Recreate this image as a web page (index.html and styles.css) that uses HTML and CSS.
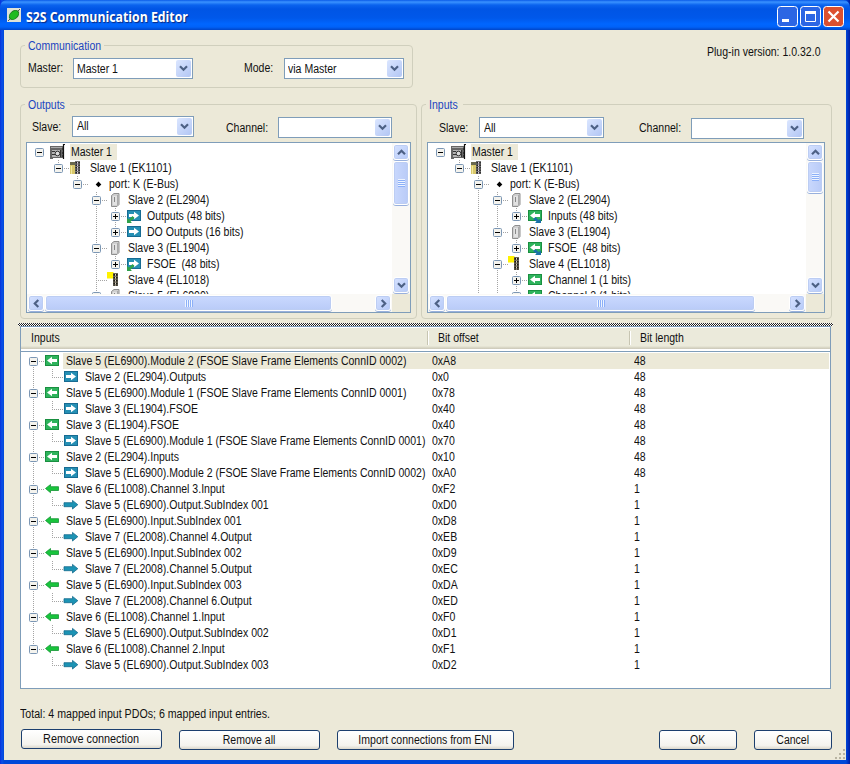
FILE: index.html
```html
<!DOCTYPE html>
<html lang="en">
<head>
<meta charset="utf-8">
<title>S2S Communication Editor</title>
<link rel="stylesheet" href="styles.css">
</head>
<body>
<svg class="defs" width="0" height="0" aria-hidden="true">
  <symbol id="down" viewBox="0 0 9 7"><path d="M1 1.2 4.5 4.7 8 1.2" fill="none" stroke="#4d6185" stroke-width="2.2"/></symbol>
  <symbol id="up" viewBox="0 0 9 7"><path d="M1 5.3 4.5 1.8 8 5.3" fill="none" stroke="#4d6185" stroke-width="2.2"/></symbol>
  <symbol id="left" viewBox="0 0 7 9"><path d="M5.3 1 1.8 4.5 5.3 8" fill="none" stroke="#4d6185" stroke-width="2.2"/></symbol>
  <symbol id="right" viewBox="0 0 7 9"><path d="M1.7 1 5.2 4.5 1.7 8" fill="none" stroke="#4d6185" stroke-width="2.2"/></symbol>
  <symbol id="minus" viewBox="0 0 9 9"><rect x=".5" y=".5" width="8" height="8" rx="1" fill="#f4f3ee" stroke="#7b96b4"/><path d="M2 4.5h5" stroke="#000"/></symbol>
  <symbol id="plus" viewBox="0 0 9 9"><rect x=".5" y=".5" width="8" height="8" rx="1" fill="#f4f3ee" stroke="#7b96b4"/><path d="M2 4.5h5M4.5 2v5" stroke="#000"/></symbol>
  <symbol id="master" viewBox="0 0 16 16"><path d="M0 2h13v12H3v1H0z" fill="#666"/><path d="M1 3.5h11" stroke="#aaa"/><path d="M2 6h9v7H2z" fill="#b4b4b4"/><circle cx="7.500" cy="9.500" r="2.300" fill="#ddd" stroke="#333"/><path d="M2 7.500h3M2 10.500h3M10.500 6v7" stroke="#333"/><path d="M15 .5h-1.500V15M12 5h2M12 9h2M12 12h2" fill="none" stroke="#111" stroke-width="1.200"/></symbol>
  <symbol id="coupler" viewBox="0 0 16 16"><path d="M1 2h5v12H1z" fill="#d8c76b"/><path d="M1 2h5v3H1z" fill="#6a684f"/><path d="M2.500 6v8" stroke="#f3e9a0"/><path d="M6 1h5v13H6z" fill="#777"/><path d="M7.200 2v12M10 2v12" stroke="#111" stroke-width="1.300" stroke-dasharray="1.5 1"/><path d="M8.600 2v12" stroke="#e8d6ef" stroke-dasharray="1.5 1"/></symbol>
  <symbol id="port" viewBox="0 0 16 16"><path d="M10.500 5.500 13.300 8.400 10.500 11.300 7.700 8.400z" fill="#000"/></symbol>
  <symbol id="module" viewBox="0 0 16 16"><path d="M4.500 3.500 7 1.500h5v11l-2 2H4.500z" fill="#cfcfcf" stroke="#8f8f8f"/><path d="M6 4h4v9H6z" fill="#e2e2e2"/><path d="M10.500 3v10" stroke="#aaa"/><path d="M7.500 5v5" stroke="#888"/></symbol>
  <symbol id="terminal" viewBox="0 0 16 16"><path d="M0 0h6.500v6.500H0z" fill="#fff200"/><path d="M6 1h5v13H6z" fill="#6d6757"/><path d="M7.200 2v12M9.800 2v12" stroke="#111" stroke-width="1.400" stroke-dasharray="1.7 1.2"/><path d="M8.500 2v12" stroke="#dcd6c4" stroke-dasharray="1.7 1.2"/></symbol>
  <symbol id="pdo-out" viewBox="0 0 16 16"><rect x="1.500" y="2.500" width="13" height="10" fill="#258fb4" stroke="#176b92"/><path d="M3 6h5V3.800L13 7.500 8 11.200V9H3z" fill="#fff"/></symbol>
  <symbol id="pdo-in" viewBox="0 0 16 16"><rect x="1.500" y="2.500" width="13" height="10" fill="#2eb35c" stroke="#198f40"/><path d="M13 6H8V3.800L3 7.500l5 3.700V9h5z" fill="#fff"/></symbol>
  <symbol id="safe-out" viewBox="0 0 16 16"><use href="#pdo-out"/><path d="M1 10v5h5l-1.500-1.500L8.500 10 6.500 8 3 11.500z" fill="#2fa14b"/></symbol>
  <symbol id="safe-in" viewBox="0 0 16 16"><use href="#pdo-in"/><path d="M6 11 8.500 9l3 3 2.500-1.500V15H8l1.500-1.500z" fill="#1b72a8"/></symbol>
  <symbol id="arrow-in" viewBox="0 0 16 16"><path d="M1.500 7.500 6.500 3.500v2.200h8v3.800h-8v2.200z" fill="#18c43c" stroke="#149434" stroke-width=".8"/></symbol>
  <symbol id="arrow-out" viewBox="0 0 16 16"><path d="M14.800 7.700 9.500 3.400v2.300H1v4h8.500V12z" fill="#1c93b4" stroke="#146b8e" stroke-width=".8"/></symbol>
</svg>

<header class="titlebar">
  <svg class="app" width="14" height="14" viewBox="0 0 14 14"><rect width="14" height="14" fill="#dfe2d6"/><path d="M1 13 13 1" stroke="#555"/><ellipse cx="7" cy="7" rx="5.300" ry="3.700" transform="rotate(-42 7 7)" fill="#1fbb20" stroke="#187c1c"/></svg>
  <h1>S2S Communication Editor</h1>
  <div class="winbtns">
    <svg width="21" height="21" viewBox="0 0 21 21"><rect class="wb" x=".5" y=".5" width="20" height="20" rx="3"/><path d="M5 14.500h7" stroke="#fff" stroke-width="3"/></svg>
    <svg width="21" height="21" viewBox="0 0 21 21"><rect class="wb" x=".5" y=".5" width="20" height="20" rx="3"/><path d="M5.500 6v9.500h10V6" fill="none" stroke="#fff"/><path d="M5 6.500h11" stroke="#fff" stroke-width="3"/></svg>
    <svg width="21" height="21" viewBox="0 0 21 21"><rect class="wb close" x=".5" y=".5" width="20" height="20" rx="3"/><path d="m5.500 5.500 10 10m0-10-10 10" stroke="#fff" stroke-width="2.200"/></svg>
  </div>
</header>

<main class="client">
  <div class="top">
    <section class="group comm">
      <div class="legend"><span class="t">Communication</span></div>
      <div class="fields">
        <label class="lb-master"><span class="t">Master:</span></label>
        <div class="combo w120"><span class="t">Master 1</span><b><svg width="9" height="7"><use href="#down"/></svg></b></div>
        <label class="lb-mode"><span class="t">Mode:</span></label>
        <div class="combo w120"><span class="t">via Master</span><b><svg width="9" height="7"><use href="#down"/></svg></b></div>
      </div>
    </section>
    <div class="version"><span class="t">Plug-in version: 1.0.32.0</span></div>
  </div>

  <div class="panels">
    <section class="group outputs">
      <div class="legend"><span class="t">Outputs</span></div>
      <div class="fields">
        <label class="lb-slave"><span class="t">Slave:</span></label>
        <div class="combo slave"><span class="t">All</span><b><svg width="9" height="7"><use href="#down"/></svg></b></div>
        <label class="lb-channel"><span class="t">Channel:</span></label>
        <div class="combo channel"><b><svg width="9" height="7"><use href="#down"/></svg></b></div>
      </div>
      <div class="treebox">
        <div class="view">
          <ul class="tree root">
            <li><div class="row"><svg class="ex"><use href="#minus"/></svg><svg class="ic"><use href="#master"/></svg><span class="hl"><span class="t">Master 1</span></span></div>
              <ul>
                <li><div class="row"><svg class="ex"><use href="#minus"/></svg><svg class="ic"><use href="#coupler"/></svg><span class="t">Slave 1 (EK1101)</span></div>
                  <ul>
                    <li><div class="row"><svg class="ex"><use href="#minus"/></svg><svg class="ic"><use href="#port"/></svg><span class="t">port: K (E-Bus)</span></div>
                      <ul>
                        <li><div class="row"><svg class="ex"><use href="#minus"/></svg><svg class="ic"><use href="#module"/></svg><span class="t">Slave 2 (EL2904)</span></div>
                          <ul>
                            <li><div class="row"><svg class="ex"><use href="#plus"/></svg><svg class="ic"><use href="#safe-out"/></svg><span class="t">Outputs (48 bits)</span></div></li>
                            <li><div class="row"><svg class="ex"><use href="#plus"/></svg><svg class="ic"><use href="#pdo-out"/></svg><span class="t">DO Outputs (16 bits)</span></div></li>
                          </ul>
                        </li>
                        <li><div class="row"><svg class="ex"><use href="#minus"/></svg><svg class="ic"><use href="#module"/></svg><span class="t">Slave 3 (EL1904)</span></div>
                          <ul>
                            <li><div class="row"><svg class="ex"><use href="#plus"/></svg><svg class="ic"><use href="#safe-out"/></svg><span class="t">FSOE&nbsp; (48 bits)</span></div></li>
                          </ul>
                        </li>
                        <li><div class="row"><svg class="ex"></svg><svg class="ic"><use href="#terminal"/></svg><span class="t">Slave 4 (EL1018)</span></div></li>
                        <li><div class="row"><svg class="ex"><use href="#minus"/></svg><svg class="ic"><use href="#module"/></svg><span class="t">Slave 5 (EL6900)</span></div></li>
                      </ul>
                    </li>
                  </ul>
                </li>
              </ul>
            </li>
          </ul>
        </div>
        <div class="vscroll"><b class="sb"><svg width="9" height="7"><use href="#up"/></svg></b><b class="thumb"><i></i></b><b class="sb end"><svg width="9" height="7"><use href="#down"/></svg></b></div>
        <div class="hscroll"><b class="sb"><svg width="7" height="9"><use href="#left"/></svg></b><b class="thumb"><i></i></b><b class="sb end"><svg width="7" height="9"><use href="#right"/></svg></b></div>
        <div class="corner"></div>
      </div>
    </section>

    <section class="group inputs">
      <div class="legend"><span class="t">Inputs</span></div>
      <div class="fields">
        <label class="lb-slave"><span class="t">Slave:</span></label>
        <div class="combo slave"><span class="t">All</span><b><svg width="9" height="7"><use href="#down"/></svg></b></div>
        <label class="lb-channel"><span class="t">Channel:</span></label>
        <div class="combo channel"><b><svg width="9" height="7"><use href="#down"/></svg></b></div>
      </div>
      <div class="treebox">
        <div class="view">
          <ul class="tree root">
            <li><div class="row"><svg class="ex"><use href="#minus"/></svg><svg class="ic"><use href="#master"/></svg><span class="hl"><span class="t">Master 1</span></span></div>
              <ul>
                <li><div class="row"><svg class="ex"><use href="#minus"/></svg><svg class="ic"><use href="#coupler"/></svg><span class="t">Slave 1 (EK1101)</span></div>
                  <ul>
                    <li class="more"><div class="row"><svg class="ex"><use href="#minus"/></svg><svg class="ic"><use href="#port"/></svg><span class="t">port: K (E-Bus)</span></div>
                      <ul>
                        <li><div class="row"><svg class="ex"><use href="#minus"/></svg><svg class="ic"><use href="#module"/></svg><span class="t">Slave 2 (EL2904)</span></div>
                          <ul>
                            <li><div class="row"><svg class="ex"><use href="#plus"/></svg><svg class="ic"><use href="#safe-in"/></svg><span class="t">Inputs (48 bits)</span></div></li>
                          </ul>
                        </li>
                        <li><div class="row"><svg class="ex"><use href="#minus"/></svg><svg class="ic"><use href="#module"/></svg><span class="t">Slave 3 (EL1904)</span></div>
                          <ul>
                            <li><div class="row"><svg class="ex"><use href="#plus"/></svg><svg class="ic"><use href="#safe-in"/></svg><span class="t">FSOE&nbsp; (48 bits)</span></div></li>
                          </ul>
                        </li>
                        <li class="more"><div class="row"><svg class="ex"><use href="#minus"/></svg><svg class="ic"><use href="#terminal"/></svg><span class="t">Slave 4 (EL1018)</span></div>
                          <ul>
                            <li><div class="row"><svg class="ex"><use href="#plus"/></svg><svg class="ic"><use href="#pdo-in"/></svg><span class="t">Channel 1 (1 bits)</span></div></li>
                            <li><div class="row"><svg class="ex"><use href="#plus"/></svg><svg class="ic"><use href="#pdo-in"/></svg><span class="t">Channel 2 (1 bits)</span></div></li>
                          </ul>
                        </li>
                      </ul>
                    </li>
                  </ul>
                </li>
              </ul>
            </li>
          </ul>
        </div>
        <div class="vscroll"><b class="sb"><svg width="9" height="7"><use href="#up"/></svg></b><b class="thumb"><i></i></b><b class="sb end"><svg width="9" height="7"><use href="#down"/></svg></b></div>
        <div class="hscroll"><b class="sb"><svg width="7" height="9"><use href="#left"/></svg></b><b class="thumb"><i></i></b><b class="sb end"><svg width="7" height="9"><use href="#right"/></svg></b></div>
        <div class="corner"></div>
      </div>
    </section>
  </div>

  <div class="splitter"></div>

  <section class="list">
    <div class="head"><div class="h1c"><span class="t">Inputs</span></div><div class="h2c"><span class="t">Bit offset</span></div><div class="h3c"><span class="t">Bit length</span></div></div>
    <ul class="tree map">
      <li><div class="row sel"><svg class="ex"><use href="#minus"/></svg><svg class="ic"><use href="#pdo-in"/></svg><div class="name"><span class="t">Slave 5 (EL6900).Module 2 (FSOE Slave Frame Elements ConnID 0002)</span></div><div class="off"><span class="t">0xA8</span></div><div class="len"><span class="t">48</span></div></div>
        <ul><li><div class="row"><svg class="ex"></svg><svg class="ic"><use href="#pdo-out"/></svg><div class="name"><span class="t">Slave 2 (EL2904).Outputs</span></div><div class="off"><span class="t">0x0</span></div><div class="len"><span class="t">48</span></div></div></li></ul></li>
      <li><div class="row"><svg class="ex"><use href="#minus"/></svg><svg class="ic"><use href="#pdo-in"/></svg><div class="name"><span class="t">Slave 5 (EL6900).Module 1 (FSOE Slave Frame Elements ConnID 0001)</span></div><div class="off"><span class="t">0x78</span></div><div class="len"><span class="t">48</span></div></div>
        <ul><li><div class="row"><svg class="ex"></svg><svg class="ic"><use href="#pdo-out"/></svg><div class="name"><span class="t">Slave 3 (EL1904).FSOE</span></div><div class="off"><span class="t">0x40</span></div><div class="len"><span class="t">48</span></div></div></li></ul></li>
      <li><div class="row"><svg class="ex"><use href="#minus"/></svg><svg class="ic"><use href="#pdo-in"/></svg><div class="name"><span class="t">Slave 3 (EL1904).FSOE</span></div><div class="off"><span class="t">0x40</span></div><div class="len"><span class="t">48</span></div></div>
        <ul><li><div class="row"><svg class="ex"></svg><svg class="ic"><use href="#pdo-out"/></svg><div class="name"><span class="t">Slave 5 (EL6900).Module 1 (FSOE Slave Frame Elements ConnID 0001)</span></div><div class="off"><span class="t">0x70</span></div><div class="len"><span class="t">48</span></div></div></li></ul></li>
      <li><div class="row"><svg class="ex"><use href="#minus"/></svg><svg class="ic"><use href="#pdo-in"/></svg><div class="name"><span class="t">Slave 2 (EL2904).Inputs</span></div><div class="off"><span class="t">0x10</span></div><div class="len"><span class="t">48</span></div></div>
        <ul><li><div class="row"><svg class="ex"></svg><svg class="ic"><use href="#pdo-out"/></svg><div class="name"><span class="t">Slave 5 (EL6900).Module 2 (FSOE Slave Frame Elements ConnID 0002)</span></div><div class="off"><span class="t">0xA0</span></div><div class="len"><span class="t">48</span></div></div></li></ul></li>
      <li><div class="row"><svg class="ex"><use href="#minus"/></svg><svg class="ic"><use href="#arrow-in"/></svg><div class="name"><span class="t">Slave 6 (EL1008).Channel 3.Input</span></div><div class="off"><span class="t">0xF2</span></div><div class="len"><span class="t">1</span></div></div>
        <ul><li><div class="row"><svg class="ex"></svg><svg class="ic"><use href="#arrow-out"/></svg><div class="name"><span class="t">Slave 5 (EL6900).Output.SubIndex 001</span></div><div class="off"><span class="t">0xD0</span></div><div class="len"><span class="t">1</span></div></div></li></ul></li>
      <li><div class="row"><svg class="ex"><use href="#minus"/></svg><svg class="ic"><use href="#arrow-in"/></svg><div class="name"><span class="t">Slave 5 (EL6900).Input.SubIndex 001</span></div><div class="off"><span class="t">0xD8</span></div><div class="len"><span class="t">1</span></div></div>
        <ul><li><div class="row"><svg class="ex"></svg><svg class="ic"><use href="#arrow-out"/></svg><div class="name"><span class="t">Slave 7 (EL2008).Channel 4.Output</span></div><div class="off"><span class="t">0xEB</span></div><div class="len"><span class="t">1</span></div></div></li></ul></li>
      <li><div class="row"><svg class="ex"><use href="#minus"/></svg><svg class="ic"><use href="#arrow-in"/></svg><div class="name"><span class="t">Slave 5 (EL6900).Input.SubIndex 002</span></div><div class="off"><span class="t">0xD9</span></div><div class="len"><span class="t">1</span></div></div>
        <ul><li><div class="row"><svg class="ex"></svg><svg class="ic"><use href="#arrow-out"/></svg><div class="name"><span class="t">Slave 7 (EL2008).Channel 5.Output</span></div><div class="off"><span class="t">0xEC</span></div><div class="len"><span class="t">1</span></div></div></li></ul></li>
      <li><div class="row"><svg class="ex"><use href="#minus"/></svg><svg class="ic"><use href="#arrow-in"/></svg><div class="name"><span class="t">Slave 5 (EL6900).Input.SubIndex 003</span></div><div class="off"><span class="t">0xDA</span></div><div class="len"><span class="t">1</span></div></div>
        <ul><li><div class="row"><svg class="ex"></svg><svg class="ic"><use href="#arrow-out"/></svg><div class="name"><span class="t">Slave 7 (EL2008).Channel 6.Output</span></div><div class="off"><span class="t">0xED</span></div><div class="len"><span class="t">1</span></div></div></li></ul></li>
      <li><div class="row"><svg class="ex"><use href="#minus"/></svg><svg class="ic"><use href="#arrow-in"/></svg><div class="name"><span class="t">Slave 6 (EL1008).Channel 1.Input</span></div><div class="off"><span class="t">0xF0</span></div><div class="len"><span class="t">1</span></div></div>
        <ul><li><div class="row"><svg class="ex"></svg><svg class="ic"><use href="#arrow-out"/></svg><div class="name"><span class="t">Slave 5 (EL6900).Output.SubIndex 002</span></div><div class="off"><span class="t">0xD1</span></div><div class="len"><span class="t">1</span></div></div></li></ul></li>
      <li><div class="row"><svg class="ex"><use href="#minus"/></svg><svg class="ic"><use href="#arrow-in"/></svg><div class="name"><span class="t">Slave 6 (EL1008).Channel 2.Input</span></div><div class="off"><span class="t">0xF1</span></div><div class="len"><span class="t">1</span></div></div>
        <ul><li><div class="row"><svg class="ex"></svg><svg class="ic"><use href="#arrow-out"/></svg><div class="name"><span class="t">Slave 5 (EL6900).Output.SubIndex 003</span></div><div class="off"><span class="t">0xD2</span></div><div class="len"><span class="t">1</span></div></div></li></ul></li>
    </ul>
  </section>

  <div class="total"><span class="t">Total: 4 mapped input PDOs; 6 mapped input entries.</span></div>
  <div class="buttons">
    <button class="b-remove"><span class="t">Remove connection</span></button>
    <button class="b-all"><span class="t">Remove all</span></button>
    <button class="b-import"><span class="t">Import connections from ENI</span></button>
    <button class="b-ok"><span class="t">OK</span></button>
    <button class="b-cancel"><span class="t">Cancel</span></button>
    <svg class="grip" width="12" height="12" viewBox="0 0 12 12"><path d="M9 1h2v2H9zM5 5h2v2H5zM9 5h2v2H9zM1 9h2v2H1zM5 9h2v2H5zM9 9h2v2H9z" fill="#b8b4a2"/></svg>
  </div>
</main>
</body>
</html>
```
FILE: styles.css
```css
* { box-sizing: border-box; }

body {
  margin: 0;
  width: 850px;
  height: 764px;
  overflow: hidden;
  background: linear-gradient(to right, #0831d9 0, #0a4fe8 2px, #0048d8 4px, #0048d8 846px, #0030c0 848px, #001ea0 850px);
  font: 12px/16px "Liberation Sans", Arial, sans-serif;
  color: #111;
}

.defs { display: none; }
ul { list-style: none; margin: 0; padding: 0; }
svg { display: block; flex: none; }

/* Narrow UI face */
.t {
  display: inline-block;
  white-space: nowrap;
  transform: scaleX(.877);
  transform-origin: 0 50%;
}

/* Title bar */
.titlebar {
  display: flex;
  align-items: center;
  height: 30px;
  padding: 4px 6px 0 7px;
  border-radius: 7px 7px 0 0;
  background: linear-gradient(#0a5be8 0, #3a92ff 2px, #0a63ee 5px, #0055e5 9px, #0058ea 18px, #0066ff 24px, #0062f8 27px, #0045c8 30px);
}
.app { margin-top: -4px; }
.titlebar h1 {
  flex: 1;
  margin: 0 0 0 5px;
  color: #fff;
  font: bold 13.5px/20px "Open Sans", "Noto Sans", sans-serif;
  text-shadow: 1px 1px 1px #0a2a80;
  white-space: nowrap;
  transform: scaleX(.91);
  transform-origin: 0 50%;
}
.winbtns { display: flex; gap: 2px; margin-top: -1px; }
.wb { fill: #2c66e4; stroke: #fff; }
.wb.close { fill: #dc5030; }

.client {
  height: 730px;
  margin: 0 4px;
  padding-left: 16px;
  background: #ece9d8;
}

/* Group boxes */
.top { display: flex; padding-top: 15px; height: 74px; }
.group { border: 1px solid #d0cfbd; border-radius: 4px; }
.legend {
  height: 14px;
  margin: -8px 0 0 4px;
  padding-left: 3px;
  background: #ece9d8;
  color: #1a45c0;
  line-height: 16px;
}
.comm { width: 393px; height: 43px; }
.comm .legend { width: 79px; }
.comm .fields { padding: 6px 0 0 7px; }
.fields { display: flex; line-height: 21px; }
label { flex: none; }
.lb-master { width: 45px; }
.lb-mode { width: 40px; margin-left: 51px; }
.version { margin: -1px 0 0 294px; }

.combo {
  display: flex;
  flex: none;
  justify-content: space-between;
  height: 21px;
  padding: 1px 1px 1px 3px;
  border: 1px solid #7f9db9;
  background: #fff;
  line-height: 19px;
}
.combo b {
  display: flex;
  align-items: center;
  justify-content: center;
  width: 15px;
  height: 17px;
  margin-left: auto;
  border-radius: 2px;
  background: linear-gradient(135deg, #dbe6ff, #b2c6f4);
}
.w120 { width: 120px; }

.panels { display: flex; gap: 4px; height: 219px; }
.outputs { width: 397px; height: 215px; }
.inputs { width: 411px; height: 215px; }
.outputs .legend { width: 45px; }
.inputs .legend { width: 37px; }
.outputs .fields { padding: 5px 0 0 11px; height: 31px; }
.inputs .fields { padding: 6px 0 0 17px; height: 31px; }
.outputs .lb-slave { width: 40px; margin-top: 1px; }
.outputs .slave { width: 122px; }
.slave { padding-left: 4px; }
.outputs .slave .t { margin-top: -1px; }
.outputs .lb-channel { width: 52px; margin: 2px 0 0 32px; }
.outputs .channel { width: 114px; margin-top: 1px; }
.inputs .lb-slave { width: 40px; margin-top: 1px; }
.inputs .slave { width: 125px; }
.inputs .lb-channel { width: 52px; margin: 1px 0 0 35px; }
.inputs .channel { width: 113px; margin-top: 1px; }

/* Tree boxes with scroll bars */
.treebox {
  display: grid;
  grid-template: 151px 18px / 1fr 18px;
  width: 385px;
  margin-left: 5px;
  border: 1px solid #7f9db9;
  background: #fff;
}
.inputs .treebox { width: 398px; }
.view { overflow: hidden; padding: 1px 0 0 8px; }
.corner { background: #ece9d8; }
.vscroll, .hscroll { display: flex; gap: 1px; padding: 1px; background: #faf9f6; }
.vscroll { flex-direction: column; }
.sb, .thumb {
  display: flex;
  flex: none;
  align-items: center;
  justify-content: center;
  border: 1px solid #fff;
  border-radius: 3px;
  background: linear-gradient(135deg, #d6e2ff, #b6caf8);
  box-shadow: inset 0 0 0 1px #bccdf3, 0 1px 0 #98b0dd;
}
.sb { width: 16px; height: 16px; }
.vscroll .end { margin-top: auto; }
.hscroll .end { margin-left: auto; }
.vscroll .thumb { width: 16px; height: 44px; background: linear-gradient(to right, #c9d8fd, #b9cbf7); }
.hscroll .thumb { width: 287px; height: 16px; background: linear-gradient(#cad9ff, #b9cbf8); }
.inputs .vscroll .thumb { height: 32px; }
.inputs .hscroll .thumb { width: 309px; }
.vscroll .thumb i { width: 7px; height: 8px; background: repeating-linear-gradient(#eef4ff 0 1px, #8cb0f8 1px 2px); }
.hscroll .thumb i { width: 8px; height: 7px; background: repeating-linear-gradient(to right, #eef4ff 0 1px, #8cb0f8 1px 2px); }

/* Tree rows; the dotted guides are one-pixel gradients */
.tree ul { margin-left: 19px; }
.tree li {
  background: repeating-linear-gradient(#a4a4a4 0 1px, transparent 1px 2px) 4px 0 / 1px 100% no-repeat;
}
.tree li:last-child { background-size: 1px 8px; }
.tree li.more { background-size: 1px 100%; }
.root > li { background: none !important; }
.row {
  display: flex;
  height: 16px;
  background: repeating-linear-gradient(to right, #a4a4a4 0 1px, transparent 1px 2px) 4px 8px / 12px 1px no-repeat;
}
.root > li > .row { background: none; }
.ex { width: 9px; height: 9px; margin: 4px 6px 0 0; }
.ic { width: 16px; height: 16px; margin-right: 5px; }
.hl { width: 47px; height: 16px; margin-left: -1px; padding-left: 1px; background: #ece9d8; }

/* Splitter */
.splitter {
  width: 815px;
  height: 3px;
  margin-left: -2px;
  background: repeating-conic-gradient(#222 0 25%, #fff 0 50%) 0 0 / 2px 2px;
}

/* Mapping list */
.list { width: 811px; height: 363px; border: 1px solid #7f9db9; background: #fff; }
.head {
  display: flex;
  height: 25px;
  border-top: 1px solid #fff;
  border-bottom: 1px solid #7f9db9;
  background: linear-gradient(#ebeadb 0 18px, #dedccb 19px, #cbc7b8 21px, #fff 21px);
  line-height: 21px;
}
.h1c { width: 406px; padding-left: 10px; }
.h2c { width: 202px; padding-left: 11px; }
.h3c { padding-left: 11px; }
.h2c, .h3c {
  background: linear-gradient(#c7c5b2, #c7c5b2) 0 3px / 1px 14px no-repeat, linear-gradient(#fff, #fff) 1px 3px / 1px 14px no-repeat;
}
.map { padding: 1px 1px 0 8px; }
.map > li:first-child { background-position: 4px 8px; }
.map > li:last-child { background-position: 4px 0; }
.map .ic { width: 16px; margin-right: 3px; }
.name { flex: 1; min-width: 0; height: 16px; padding-left: 3px; }
.off { flex: none; width: 202px; }
.len { flex: none; width: 195px; }
.map .off, .map .len { text-indent: 0; }
.sel .name, .sel .off, .sel .len { background: #ece9d8; }

/* Footer */
.total { margin-top: 17px; height: 23px; }
.total .t { transform: scaleX(.886); }
.buttons { display: flex; padding-left: 1px; }
button {
  flex: none;
  height: 20px;
  margin-top: 1px;
  padding: 0;
  border: 1px solid #1c3f6e;
  border-radius: 3px;
  background: linear-gradient(#fff, #f4f3ee 80%, #dcd8cc);
  color: #111;
  font: inherit;
  line-height: 18px;
}
button .t { transform-origin: 50% 50%; }
.b-remove { width: 141px; margin-top: 0; }
.b-remove .t { transform: scaleX(.905); }
.b-all { width: 141px; margin-left: 17px; }
.b-import { width: 177px; margin-left: 17px; }
.b-ok { width: 78px; margin-left: 145px; }
.b-cancel { width: 78px; margin-left: 17px; }
.grip { margin: 19px 0 0 2px; }
```
